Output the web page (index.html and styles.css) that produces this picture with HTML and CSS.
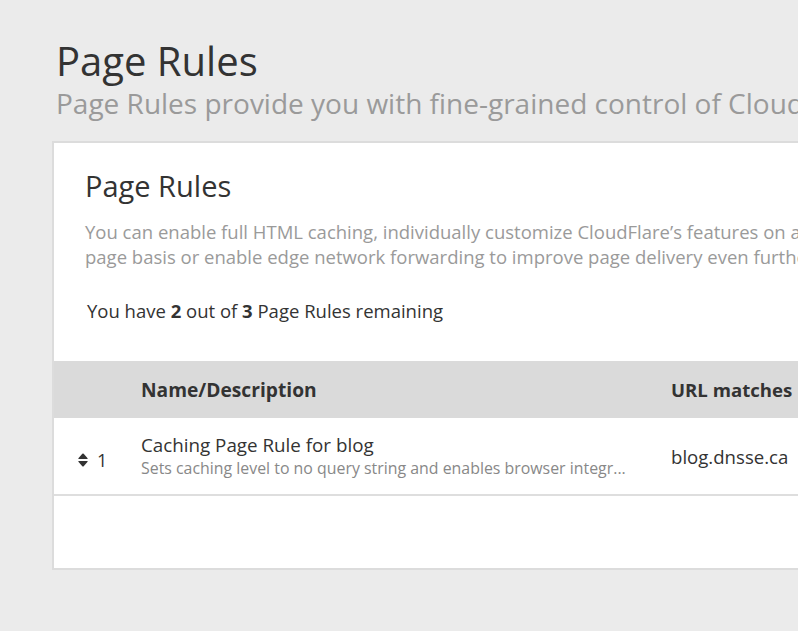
FILE: index.html
```html
<!DOCTYPE html>
<html>
<head>
<meta charset="utf-8">
<link rel="stylesheet" href="styles.css">
</head>
<body>
<div class="page">
  <header class="page-head">
    <h1 class="page-title">Page Rules</h1>
    <p class="page-sub">Page Rules provide you with fine-grained control of CloudFlare's features on a per-URL basis.</p>
  </header>
  <section class="card">
    <div class="card-body">
      <h2 class="card-title">Page Rules</h2>
      <p class="card-desc">You can enable full HTML caching, individually customize CloudFlare’s features on a per-<br>page basis or enable edge network forwarding to improve page delivery even further.</p>
      <p class="remaining">You have <b>2</b> out of <b>3</b> Page Rules remaining</p>
    </div>
    <div class="table">
      <div class="row head">
        <div class="c-num"></div>
        <div class="c-name">Name/Description</div>
        <div class="c-url">URL matches</div>
      </div>
      <div class="row item">
        <div class="c-num">
          <svg class="sort" width="10" height="14" viewBox="0 0 10 14"><path d="M4.3 0.8 Q5 0 5.7 0.8 L9.6 5.2 Q10 6 9.2 6 L0.8 6 Q0 6 0.4 5.2 Z M4.3 13.2 Q5 14 5.7 13.2 L9.6 8.8 Q10 8 9.2 8 L0.8 8 Q0 8 0.4 8.8 Z" fill="#333"/></svg>
          <span>1</span>
        </div>
        <div class="c-name">
          <div class="rule-name">Caching Page Rule for blog</div>
          <div class="rule-desc">Sets caching level to no query string and enables browser integr...</div>
        </div>
        <div class="c-url">blog.dnsse.ca</div>
      </div>
      <div class="empty"></div>
    </div>
  </section>
</div>
</body>
</html>
```
FILE: styles.css
```css
html, body {
  margin: 0;
  padding: 0;
  background: #ebebeb;
  overflow: hidden;
  height: 631px;
}
body {
  font-family: "Open Sans", "Liberation Sans", sans-serif;
  color: #333;
}
.page {
  padding: 35px 0 0 52px;
  width: 1200px;
}
.page-head {
  padding-left: 4px;
}
.page-title {
  margin: 0;
  font-weight: 400;
  font-size: 40px;
  line-height: 52px;
  color: #333;
}
.page-sub {
  margin: 0;
  font-size: 28px;
  line-height: 32px;
  color: #9a9a9a;
  white-space: nowrap;
}
.card {
  margin-top: 22px;
  background: #fff;
  border: 2px solid #dcdcdc;
  width: 1000px;
}
.card-body {
  padding: 24px 31px 38px;
}
.card-title {
  margin: 0;
  font-weight: 400;
  font-size: 29px;
  line-height: 38px;
  color: #333;
}
.card-desc {
  margin: 14px 0 0;
  font-size: 18.5px;
  line-height: 25px;
  color: #9a9a9a;
  white-space: nowrap;
}
.remaining {
  margin: 30px 0 0 2px;
  font-size: 18.5px;
  line-height: 24px;
  color: #333;
}
.remaining b {
  font-weight: 700;
}
.row {
  display: flex;
  align-items: center;
}
.head {
  background: #dadada;
  height: 57px;
  font-weight: 700;
  font-size: 19.2px;
}
.item {
  height: 76px;
  border-bottom: 2px solid #dedede;
}
.c-num {
  width: 87px;
  display: flex;
  align-items: center;
  padding: 7px 0 0 24px;
  box-sizing: border-box;
  gap: 9px;
  font-size: 18px;
}
.c-name {
  width: 530px;
}
.c-url {
  font-size: 18.6px;
}
.rule-name {
  font-size: 18.8px;
  line-height: 24px;
}
.rule-desc {
  font-size: 15.9px;
  line-height: 22px;
  color: #888;
}
.empty {
  height: 72px;
}
```
